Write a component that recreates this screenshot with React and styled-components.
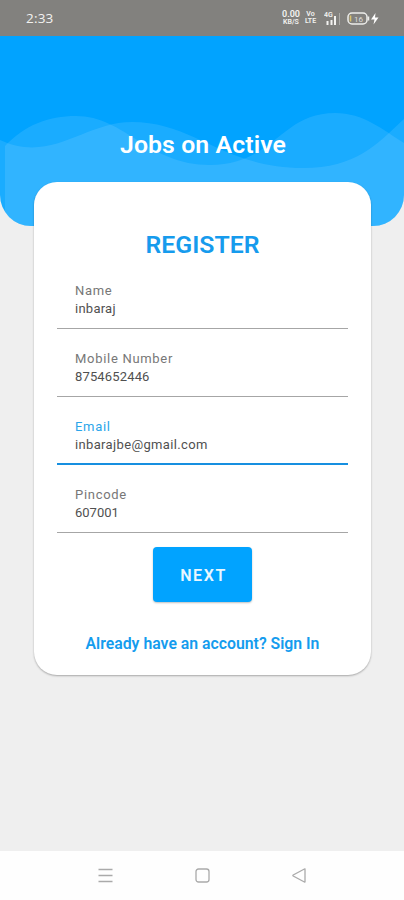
import React, { useState } from 'react';
import styled, { createGlobalStyle } from 'styled-components';

const GlobalStyle = createGlobalStyle`
  * {
    box-sizing: border-box;
  }

  body {
    margin: 0;
    background: #efefef;
    font-family: Roboto, "Liberation Sans", sans-serif;
  }
`;

const Screen = styled.div`
  width: 404px;
  height: 900px;
  display: flex;
  flex-direction: column;
  background: #efefef;
  overflow: hidden;
`;

const StatusBar = styled.div`
  height: 36px;
  flex: none;
  display: flex;
  align-items: center;
  padding: 0 24px 0 26px;
  background: #82817e;
  color: #f2f2f0;
`;

const Clock = styled.span`
  flex: 1;
  font-family: "Open Sans", "Noto Sans", sans-serif;
  font-size: 13.5px;
  font-weight: 500;
  letter-spacing: 0.2px;
`;

const StackedText = styled.span`
  display: flex;
  flex-direction: column;
  align-items: center;
  width: ${(props) => props.$width}px;
  margin-right: ${(props) => props.$gap}px;
  font-size: 7px;
  font-weight: 600;
  line-height: 7px;
  white-space: nowrap;

  span:first-child {
    font-size: ${(props) => props.$topSize || 7}px;
    line-height: ${(props) => props.$topSize || 7}px;
  }
`;

const Signal = styled.svg`
  width: 17px;
  height: 16px;
  margin-right: 6px;
`;

const Battery = styled.svg`
  width: 33px;
  height: 16px;
`;

const Header = styled.header`
  height: 190px;
  flex: none;
  display: grid;
  border-radius: 0 0 31px 31px;
  background: #01a3ff;
  overflow: hidden;

  > * {
    grid-area: 1 / 1;
  }
`;

const Waves = styled.svg`
  width: 404px;
  height: 190px;
`;

const AppTitle = styled.h1`
  margin: 94px 0 0;
  padding-left: 2px;
  z-index: 1;
  text-align: center;
  color: #fff;
  font-size: 24.8px;
  font-weight: 600;
  line-height: 30px;
  letter-spacing: 0.1px;
`;

const Card = styled.main`
  z-index: 1;
  width: 337px;
  height: 493px;
  flex: none;
  margin: -44px 0 0 34px;
  padding: 48px 23px 0;
  display: flex;
  flex-direction: column;
  align-items: center;
  border-radius: 23px;
  background: #fff;
  box-shadow: 0 1px 2px rgba(0, 0, 0, 0.3);
`;

const Title = styled.h2`
  margin: 0 0 22px;
  color: #169bed;
  font-size: 24.8px;
  font-weight: 600;
  line-height: 30px;
`;

const Form = styled.form`
  width: 100%;
  display: flex;
  flex-direction: column;
  align-items: center;
`;

const Field = styled.label`
  width: 100%;
  height: 47px;
  margin-bottom: 21px;
  padding-left: 18px;
  display: flex;
  flex-direction: column;
  border-bottom: ${(props) => (props.$active ? '2px solid #168fe0' : '1px solid #a6a6a6')};

  &:last-of-type {
    margin-bottom: 14px;
  }
`;

const FieldLabel = styled.span`
  color: ${(props) => (props.$active ? '#2aa5ea' : '#777')};
  font-size: 13px;
  line-height: 18px;
  letter-spacing: 0.7px;
`;

const FieldInput = styled.input`
  width: 100%;
  height: 18px;
  padding: 0;
  border: 0;
  outline: 0;
  background: transparent;
  color: #505050;
  font-family: inherit;
  font-size: 13px;
  line-height: 18px;
  letter-spacing: ${(props) => props.$spacing}px;
`;

const NextButton = styled.button`
  width: 99px;
  height: 55px;
  padding: 2px 0 0 2px;
  border: 0;
  border-radius: 4px;
  background: #01a3ff;
  box-shadow: 0 1px 2px rgba(0, 0, 0, 0.25);
  color: #e9f7ff;
  font-family: inherit;
  font-size: 16px;
  font-weight: 600;
  letter-spacing: 1.6px;
`;

const SignInLink = styled.a`
  margin-top: 32px;
  color: #149cee;
  font-size: 15.8px;
  font-weight: 600;
  line-height: 20px;
  text-decoration: none;
  white-space: nowrap;
`;

const NavigationBar = styled.nav`
  height: 49px;
  flex: none;
  margin-top: auto;
  display: flex;
  align-items: center;
  justify-content: center;
  gap: 80px;
  background: #fefefe;
`;

const NavIcon = styled.svg`
  width: 17px;
  height: 17px;
  fill: none;
  stroke: #aaa;
  stroke-width: 1.3;
`;

const fields = [
  { name: 'name', label: 'Name', spacing: 0.25 },
  { name: 'mobile', label: 'Mobile Number', spacing: 0.15 },
  { name: 'email', label: 'Email', spacing: 0.35 },
  { name: 'pincode', label: 'Pincode', spacing: 0 },
];

function App() {
  const [active, setActive] = useState('email');
  const [values, setValues] = useState({
    name: 'inbaraj',
    mobile: '8754652446',
    email: 'inbarajbe@gmail.com',
    pincode: '607001',
  });

  const handleChange = (e) => {
    setValues({ ...values, [e.target.name]: e.target.value });
  };

  return (
    <Screen>
      <GlobalStyle />
      <StatusBar>
        <Clock>2:33</Clock>
        <StackedText $width={20} $gap={5} $topSize={9}>
          <span>0.00</span>
          <span>KB/S</span>
        </StackedText>
        <StackedText $width={9} $gap={9}>
          <span>Vo</span>
          <span>LTE</span>
        </StackedText>
        <Signal viewBox="0 0 17 16">
          <text x="0" y="7" fontSize="7" fontWeight="600" fill="#f2f2f0">4G</text>
          <path d="M3.5 11v4M7.5 10v5M11 6v9" stroke="#f2f2f0" strokeWidth="2" />
          <path d="M15.5 3v12" stroke="#aaa9a6" strokeWidth="1" />
        </Signal>
        <Battery viewBox="0 0 33 16">
          <rect x="1" y="3" width="19" height="11" rx="4" fill="none" stroke="#ededea" strokeWidth="1.5" />
          <path d="M3.5 5.5v6" stroke="#d9c36c" strokeWidth="1.6" />
          <path d="M21.5 6.5v4" stroke="#ededea" strokeWidth="1.5" />
          <text x="7" y="11.5" fontSize="8" fill="#deddda">16</text>
          <path d="M28.5 3 24 9.5h3.5l-1 5 5-7H28z" fill="#fff" />
        </Battery>
      </StatusBar>
      <Header>
        <Waves viewBox="0 36 404 190">
          <path
            d="M5 146C25 125 48 116 76 116C125 116 148 165 210 165C274 165 280 113 335 113C364 113 383 130 404 143V226H5Z"
            fill="#fff"
            fillOpacity="0.1"
          />
          <path
            d="M0 140C52 164 84 122 132 122C194 122 224 168 303 168C356 168 376 145 404 119V226H0Z"
            fill="#fff"
            fillOpacity="0.1"
          />
        </Waves>
        <AppTitle>Jobs on Active</AppTitle>
      </Header>
      <Card>
        <Title>REGISTER</Title>
        <Form onSubmit={(e) => e.preventDefault()}>
          {fields.map(({ name, label, spacing }) => (
            <Field key={name} $active={active === name}>
              <FieldLabel $active={active === name}>{label}</FieldLabel>
              <FieldInput
                name={name}
                value={values[name]}
                onChange={handleChange}
                onFocus={() => setActive(name)}
                $spacing={spacing}
              />
            </Field>
          ))}
          <NextButton type="submit">NEXT</NextButton>
        </Form>
        <SignInLink href="#">Already have an account? Sign In</SignInLink>
      </Card>
      <NavigationBar>
        <NavIcon viewBox="0 0 17 17">
          <path d="M1.5 2.5h14M1.5 8.5h14M1.5 14.5h14" />
        </NavIcon>
        <NavIcon viewBox="0 0 17 17">
          <rect x="2" y="2" width="13" height="13" rx="2.5" />
        </NavIcon>
        <NavIcon viewBox="0 0 17 17">
          <path d="M14 2.3v12.4q0 .6-.6.3L2.2 9q-.7-.5 0-1L13.4 2q.6-.3.6.3z" />
        </NavIcon>
      </NavigationBar>
    </Screen>
  );
}

export default App;
